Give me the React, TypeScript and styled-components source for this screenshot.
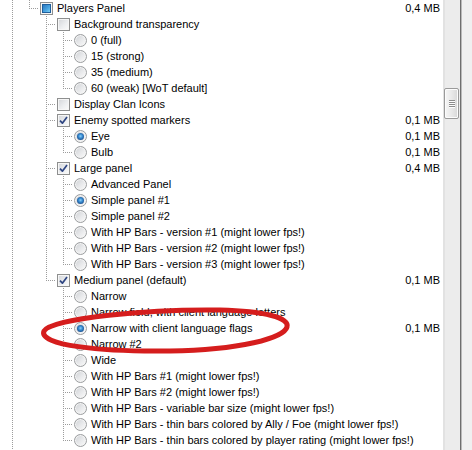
import React from 'react';
import styled, { createGlobalStyle } from 'styled-components';

type Mark = 'check' | 'radio';
type State = 'off' | 'on' | 'mixed';
type Guide = 'none' | 'pass' | 'tee' | 'end';

const GlobalStyle = createGlobalStyle`
  html, body {
    margin: 0;
    padding: 0;
    background: #f0f0f0;
    overflow: hidden;
  }
  body {
    font-family: "Liberation Sans", Arial, sans-serif;
    font-size: 11px;
    color: #000;
  }
`;

const Frame = styled.div`
  display: flex;
  width: 472px;
  height: 450px;
  overflow: hidden;
`;

const ListArea = styled.div`
  position: relative;
  width: 443px;
  flex: none;
  background: #ffffff;
  overflow: hidden;
`;

const Tree = styled.div`
  display: flex;
  flex-direction: column;
`;

const Row = styled.div`
  display: flex;
  align-items: center;
  height: 16px;
  padding: 0 3px 0 6px;
`;

const dotsDown = 'repeating-linear-gradient(to bottom, #9c9c9c 0 1px, transparent 1px 2px)';
const dotsRight = 'repeating-linear-gradient(to right, #9c9c9c 0 1px, transparent 1px 2px)';

const GuideCell = styled.span<{ $kind: Guide }>`
  position: relative;
  flex: none;
  width: 17px;
  height: 16px;

  &::before {
    content: '';
    position: absolute;
    left: 6px;
    top: 0;
    width: 1px;
    height: ${(p) => (p.$kind === 'none' ? '0' : p.$kind === 'end' ? '9px' : '16px')};
    background: ${dotsDown};
  }

  &::after {
    content: '';
    display: ${(p) => (p.$kind === 'tee' || p.$kind === 'end' ? 'block' : 'none')};
    position: absolute;
    left: 6px;
    top: 8px;
    width: 10px;
    height: 1px;
    background: ${dotsRight};
  }
`;

const CheckBox = styled.span`
  flex: none;
  display: flex;
  align-items: center;
  justify-content: center;
  box-sizing: border-box;
  width: 13px;
  height: 13px;
  border: 1px solid #8e8f8f;
  background: linear-gradient(135deg, #d2d4d8 0%, #eceef0 55%, #fbfbfb 100%);
  box-shadow: inset 0 0 0 1px #f6f6f6;
`;

const MixedFill = styled.span`
  width: 7px;
  height: 7px;
  border: 1px solid #1f5f9c;
  background: linear-gradient(135deg, #2a78c0 0%, #4aa6e2 60%, #7fcff3 100%);
`;

const Radio = styled.span<{ $on: boolean }>`
  flex: none;
  display: flex;
  align-items: center;
  justify-content: center;
  box-sizing: border-box;
  width: 13px;
  height: 13px;
  border-radius: 50%;
  border: 1px solid #9b9d9f;
  background: linear-gradient(135deg, #cdd0d4 0%, #e9eaec 55%, #fbfbfb 100%);
  box-shadow: inset 0 0 0 1px #f4f4f4;

  &::after {
    content: '';
    display: ${(p) => (p.$on ? 'block' : 'none')};
    width: 7px;
    height: 7px;
    border-radius: 50%;
    background: radial-gradient(circle at 50% 45%, #8fd0f6 0%, #3b8fd4 35%, #1a4f8e 75%, #153f73 100%);
  }
`;

const Label = styled.span`
  margin-left: 4px;
  line-height: 16px;
  white-space: nowrap;
`;

const Size = styled.span`
  margin-left: auto;
  line-height: 16px;
  white-space: nowrap;
`;

const Annotation = styled.svg`
  position: absolute;
  left: 0;
  top: 0;
  pointer-events: none;
`;

const ScrollBar = styled.div`
  flex: none;
  width: 17px;
  height: 100%;
  box-sizing: border-box;
  border-left: 2px solid #e2e2e2;
  background: #ececec;
`;

const Thumb = styled.div`
  box-sizing: border-box;
  width: 15px;
  height: 31px;
  margin: 88px 0 0 -1px;
  border: 1px solid #9a9a9a;
  border-radius: 2px;
  background: linear-gradient(to right, #f6f6f6 0%, #e9e9e9 50%, #d8d8d8 100%);
  box-shadow: inset 0 0 0 1px #fcfcfc;
  display: flex;
  flex-direction: column;
  align-items: center;
  justify-content: center;
  gap: 1px;
`;

const Grip = styled.span`
  width: 6px;
  height: 1px;
  background: #8c8c8c;
  box-shadow: 0 1px 0 #fdfdfd;
`;

const Edge = styled.div`
  flex: none;
  width: 1px;
  height: 100%;
  background: #6f6f6f;
`;

const Dialog = styled.div`
  flex: 1;
  height: 100%;
  border-left: 1px solid #b9b9b9;
  background: #f0f0f0;
`;

type Item = [number, Mark, State, string, string?];

const items: Item[] = [
  [2, 'check', 'mixed', 'Players Panel', '0,4 MB'],
  [3, 'check', 'off', 'Background transparency'],
  [4, 'radio', 'off', '0 (full)'],
  [4, 'radio', 'off', '15 (strong)'],
  [4, 'radio', 'off', '35 (medium)'],
  [4, 'radio', 'off', '60 (weak) [WoT default]'],
  [3, 'check', 'off', 'Display Clan Icons'],
  [3, 'check', 'on', 'Enemy spotted markers', '0,1 MB'],
  [4, 'radio', 'on', 'Eye', '0,1 MB'],
  [4, 'radio', 'off', 'Bulb', '0,1 MB'],
  [3, 'check', 'on', 'Large panel', '0,4 MB'],
  [4, 'radio', 'off', 'Advanced Panel'],
  [4, 'radio', 'on', 'Simple panel #1'],
  [4, 'radio', 'off', 'Simple panel #2'],
  [4, 'radio', 'off', 'With HP Bars - version #1 (might lower fps!)'],
  [4, 'radio', 'off', 'With HP Bars - version #2 (might lower fps!)'],
  [4, 'radio', 'off', 'With HP Bars - version #3 (might lower fps!)'],
  [3, 'check', 'on', 'Medium panel (default)', '0,1 MB'],
  [4, 'radio', 'off', 'Narrow'],
  [4, 'radio', 'off', 'Narrow field, with client language letters'],
  [4, 'radio', 'on', 'Narrow with client language flags', '0,1 MB'],
  [4, 'radio', 'off', 'Narrow #2'],
  [4, 'radio', 'off', 'Wide'],
  [4, 'radio', 'off', 'With HP Bars #1 (might lower fps!)'],
  [4, 'radio', 'off', 'With HP Bars #2 (might lower fps!)'],
  [4, 'radio', 'off', 'With HP Bars - variable bar size (might lower fps!)'],
  [4, 'radio', 'off', 'With HP Bars - thin bars colored by Ally / Foe (might lower fps!)'],
  [4, 'radio', 'off', 'With HP Bars - thin bars colored by player rating (might lower fps!)'],
  [1, 'check', 'off', ''],
];

// does the line hanging below level k carry on past row i?
function continues(k: number, i: number) {
  for (let j = i + 1; j < items.length; j++) {
    const lv = items[j][0];
    if (lv <= k) return false;
    if (lv === k + 1) return true;
  }
  return false;
}

function guidesFor(i: number): Guide[] {
  const level = items[i][0];
  const out: Guide[] = [];
  for (let k = 0; k < level; k++) {
    const more = continues(k, i);
    if (k === level - 1) out.push(more ? 'tee' : 'end');
    else out.push(more ? 'pass' : 'none');
  }
  return out;
}

function CheckMark() {
  return (
    <svg width="9" height="9" viewBox="0 0 9 9">
      <polyline
        points="1,4.6 3.4,7.2 8,1"
        fill="none"
        stroke="#2e4582"
        strokeWidth="1.7"
        strokeLinejoin="round"
      />
    </svg>
  );
}

export default function App() {
  return (
    <>
      <GlobalStyle />
      <Frame>
        <ListArea>
          <Tree>
            {items.map(([, mark, state, label, size], i) => (
              <Row key={i}>
                {guidesFor(i).map((g, k) => (
                  <GuideCell key={k} $kind={g} />
                ))}
                {mark === 'check' ? (
                  <CheckBox>
                    {state === 'on' && <CheckMark />}
                    {state === 'mixed' && <MixedFill />}
                  </CheckBox>
                ) : (
                  <Radio $on={state === 'on'} />
                )}
                {label && <Label>{label}</Label>}
                {size && <Size>{size}</Size>}
              </Row>
            ))}
          </Tree>
          <Annotation width="443" height="450" viewBox="0 0 443 450">
            <path
              d="M 44 331 C 52 318, 150 309, 220 310 C 265 311, 290 318, 287 327 C 284 338, 240 350, 170 351 C 100 352, 38 345, 44 331 Z"
              fill="none"
              stroke="#d51d1d"
              strokeWidth="5"
              strokeLinejoin="round"
            />
          </Annotation>
        </ListArea>
        <ScrollBar>
          <Thumb>
            <Grip />
            <Grip />
            <Grip />
            <Grip />
          </Thumb>
        </ScrollBar>
        <Edge />
        <Dialog />
      </Frame>
    </>
  );
}
